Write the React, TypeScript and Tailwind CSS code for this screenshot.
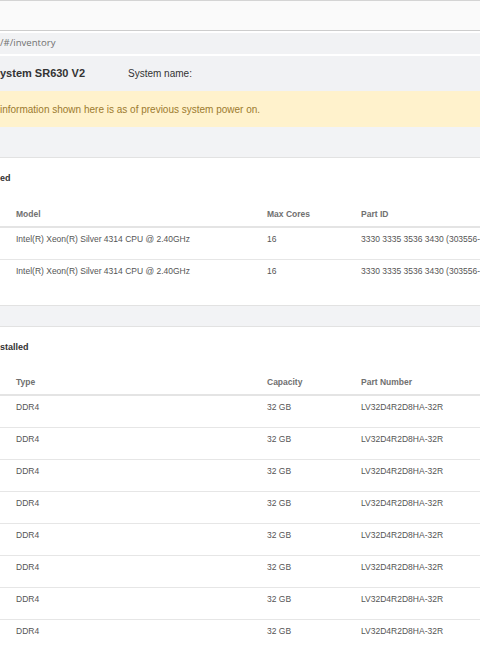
import React from "react";

const cpuRows = [
  { model: "Intel(R) Xeon(R) Silver 4314 CPU @ 2.40GHz", cores: "16", part: "3330 3335 3536 3430 (303556-" },
  { model: "Intel(R) Xeon(R) Silver 4314 CPU @ 2.40GHz", cores: "16", part: "3330 3335 3536 3430 (303556-" },
];

const memRows = Array.from({ length: 8 }, () => ({ type: "DDR4", cap: "32 GB", part: "LV32D4R2D8HA-32R" }));

function HeaderRow({ a, b, c }: { a: string; b: string; c: string }) {
  return (
    <div className="flex h-[22px] items-start border-b-2 border-[#e4e4e4] text-[8.5px] font-bold leading-[16px] text-[#707070]">
      <div className="w-[267px] shrink-0 pl-[16px]">{a}</div>
      <div className="w-[94px] shrink-0">{b}</div>
      <div className="whitespace-nowrap">{c}</div>
    </div>
  );
}

function Row({ a, b, c, last }: { a: string; b: string; c: string; last?: boolean }) {
  return (
    <div
      className={
        "flex h-[32px] items-start pt-[3px] text-[8.5px] leading-[16px] text-[#555] " +
        (last ? "" : "border-b border-[#e6e6e6]")
      }
    >
      <div className="w-[267px] shrink-0 whitespace-nowrap pl-[16px]">{a}</div>
      <div className="w-[94px] shrink-0">{b}</div>
      <div className="whitespace-nowrap">{c}</div>
    </div>
  );
}

export default function App() {
  return (
    <div className="h-[650px] w-[480px] overflow-hidden bg-white font-['Liberation_Sans',Arial,sans-serif]">
      <div className="h-[1px] bg-[#d4d4d4]" />
      <div className="h-[29px] bg-[#fafafa]" />
      <div className="h-[1px] bg-[#cdcdcd]" />
      <div className="h-[2px] bg-white" />
      <div className="flex h-[21px] items-center bg-[#f1f2f4] font-['Open_Sans',sans-serif] text-[9.6px] text-[#707070]">
        /#/inventory
      </div>
      <div className="h-[2px] bg-white" />
      <div className="flex h-[35px] items-center bg-[#f1f2f4]">
        <div className="w-[128px] shrink-0 whitespace-nowrap text-[11px] font-bold text-[#333]">ystem SR630 V2</div>
        <div className="text-[10px] text-[#333]">System name:</div>
      </div>
      <div className="flex h-[36px] items-center bg-[#fff2cc] text-[10px] text-[#9c7a2e]">
        information shown here is as of previous system power on.
      </div>
      <div className="h-[30px] bg-[#f2f3f5]" />
      <div className="h-[1px] bg-[#e2e2e2]" />

      <div className="bg-white pt-[12px] pb-[13px]">
        <div className="h-[16px] text-[9px] font-bold leading-[16px] text-[#333]">ed</div>
        <div className="h-[20px]" />
        <HeaderRow a="Model" b="Max Cores" c="Part ID" />
        {cpuRows.map((r, i) => (
          <Row key={i} a={r.model} b={r.cores} c={r.part} last={i === cpuRows.length - 1} />
        ))}
      </div>

      <div className="h-[1px] bg-[#e2e2e2]" />
      <div className="h-[20px] bg-[#f2f3f5]" />
      <div className="h-[1px] bg-[#e2e2e2]" />

      <div className="bg-white pt-[12px]">
        <div className="h-[16px] text-[9px] font-bold leading-[16px] text-[#333]">stalled</div>
        <div className="h-[19px]" />
        <HeaderRow a="Type" b="Capacity" c="Part Number" />
        {memRows.map((r, i) => (
          <Row key={i} a={r.type} b={r.cap} c={r.part} />
        ))}
      </div>
    </div>
  );
}
